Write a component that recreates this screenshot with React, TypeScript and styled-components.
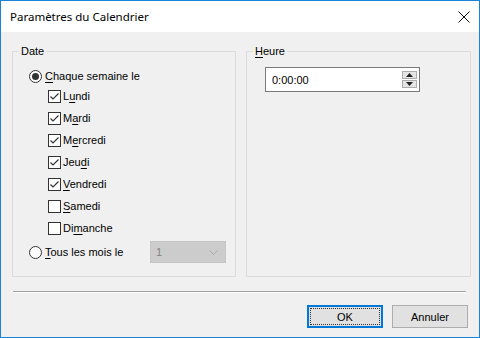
import React from "react";
import styled, { createGlobalStyle } from "styled-components";

const Global = createGlobalStyle`
  html, body { margin: 0; padding: 0; background: #ffffff; }
  body { font-family: "Liberation Sans", Arial, sans-serif; font-size: 11px; color: #000; }
`;

const Window = styled.div`
  width: 480px;
  height: 338px;
  box-sizing: border-box;
  border: 1px solid #1a84d8;
  display: flex;
  flex-direction: column;
  background: #f0f0f0;
  overflow: hidden;
`;

const TitleBar = styled.div`
  height: 31px;
  background: #ffffff;
  display: flex;
  align-items: center;
  justify-content: space-between;
  padding: 0 9px 0 9px;
  flex-shrink: 0;
`;

const Title = styled.span`
  font-family: "Noto Sans", "Open Sans", sans-serif;
  font-size: 11.5px;
  color: #000;
`;

const Body = styled.div`
  flex: 1;
  display: flex;
  flex-direction: column;
  padding: 12px 8px 0 11px;
`;

const Groups = styled.div`
  display: grid;
  grid-template-columns: 224px 225px;
  column-gap: 10px;
`;

const Group = styled.fieldset`
  margin: 0;
  padding: 0;
  border: 1px solid #dcdcdc;
  height: 233px;
  box-sizing: border-box;
  min-width: 0;
`;

const Legend = styled.legend`
  padding: 0 2px;
  margin-left: 6px;
  font-size: 11px;
  line-height: 14px;
`;

const U = styled.span`
  text-decoration: underline;
  text-underline-offset: 2px;
`;

const DateContent = styled.div`
  display: flex;
  flex-direction: column;
  padding: 7px 0 0 16px;
`;

const RadioRow = styled.label<{ $width?: number }>`
  display: flex;
  align-items: center;
  height: 22px;
  gap: 3px;
  white-space: nowrap;
  width: ${(p) => (p.$width ? `${p.$width}px` : "auto")};
`;

const Radio = styled.span<{ $checked?: boolean }>`
  width: 11px;
  height: 11px;
  border: 1px solid #333;
  border-radius: 50%;
  background: #fff;
  display: flex;
  align-items: center;
  justify-content: center;
  flex-shrink: 0;
  &::after {
    content: "";
    width: 7px;
    height: 7px;
    border-radius: 50%;
    background: ${(p) => (p.$checked ? "#333" : "transparent")};
  }
`;

const Days = styled.div`
  display: flex;
  flex-direction: column;
  margin: -2px 0 0 19px;
`;

const CheckRow = styled.label`
  display: flex;
  align-items: center;
  height: 22px;
  gap: 2px;
`;

const Box = styled.span`
  width: 11px;
  height: 11px;
  border: 1px solid #333;
  background: #fff;
  display: flex;
  align-items: center;
  justify-content: center;
  flex-shrink: 0;
`;

const MonthRow = styled.div`
  display: flex;
  align-items: center;
  margin-top: 2px;
`;

const Combo = styled.div`
  width: 76px;
  height: 22px;
  background: #cccccc;
  box-sizing: border-box;
  border: 1px solid #c6c6c6;
  display: flex;
  align-items: center;
  justify-content: space-between;
  padding: 0 7px 0 5px;
  color: #838383;
`;

const TimeContent = styled.div`
  padding: 9px 0 0 18px;
`;

const TimeBox = styled.div`
  width: 155px;
  height: 25px;
  box-sizing: border-box;
  border: 1px solid #7a7a7a;
  background: #fff;
  display: flex;
  align-items: center;
  justify-content: space-between;
  padding: 0 2px 0 6px;
`;

const Spin = styled.div`
  display: flex;
  flex-direction: column;
  gap: 1px;
`;

const SpinBtn = styled.div`
  width: 15px;
  height: 8px;
  box-sizing: border-box;
  background: #e5e5e5;
  border: 1px solid #acacac;
  display: flex;
  align-items: center;
  justify-content: center;
`;

const Separator = styled.div`
  height: 0;
  border-top: 1px solid #a0a0a0;
  border-bottom: 1px solid #fff;
  margin: 14px 5px 0 1px;
`;

const Buttons = styled.div`
  display: flex;
  justify-content: flex-end;
  gap: 9px;
  padding: 12px 3px 0 0;
`;

const Button = styled.button<{ $default?: boolean }>`
  width: 76px;
  height: 23px;
  font-family: inherit;
  font-size: 11px;
  color: #000;
  background: #e1e1e1;
  border: 1px solid ${(p) => (p.$default ? "#0078d7" : "#adadad")};
  box-shadow: ${(p) => (p.$default ? "inset 0 0 0 1px #0078d7" : "none")};
  padding: 0;
  position: relative;
  &::after {
    content: "";
    display: ${(p) => (p.$default ? "block" : "none")};
    position: absolute;
    inset: 2px;
    border: 1px dotted #333;
  }
`;

const Check = () => (
  <svg width="11" height="11" viewBox="0 0 11 11">
    <path d="M1.5 5.5 L4 8 L9.5 2.5" fill="none" stroke="#333" strokeWidth="1.2" />
  </svg>
);

const days: [string, string, string, boolean][] = [
  ["L", "u", "ndi", true],
  ["M", "a", "rdi", true],
  ["M", "e", "rcredi", true],
  ["Jeu", "d", "i", true],
  ["", "V", "endredi", true],
  ["", "S", "amedi", false],
  ["Di", "m", "anche", false],
];

export default function App() {
  return (
    <>
      <Global />
      <Window>
        <TitleBar>
          <Title>Paramètres du Calendrier</Title>
          <svg width="12" height="12" viewBox="0 0 12 12">
            <path d="M0.5 0.5 L11.5 11.5 M11.5 0.5 L0.5 11.5" stroke="#111" strokeWidth="1" />
          </svg>
        </TitleBar>
        <Body>
          <Groups>
            <Group>
              <Legend>Date</Legend>
              <DateContent>
                <RadioRow>
                  <Radio $checked />
                  <span>
                    <U>C</U>haque semaine le
                  </span>
                </RadioRow>
                <Days>
                  {days.map(([a, b, c, checked], i) => (
                    <CheckRow key={i}>
                      <Box>{checked && <Check />}</Box>
                      <span>
                        {a}
                        <U>{b}</U>
                        {c}
                      </span>
                    </CheckRow>
                  ))}
                </Days>
                <MonthRow>
                  <RadioRow $width={121}>
                    <Radio />
                    <span>
                      <U>T</U>ous les mois le
                    </span>
                  </RadioRow>
                  <Combo>
                    <span>1</span>
                    <svg width="9" height="5" viewBox="0 0 9 5">
                      <path d="M0.5 0.5 L4.5 4.5 L8.5 0.5" fill="none" stroke="#a8a8a8" strokeWidth="1" />
                    </svg>
                  </Combo>
                </MonthRow>
              </DateContent>
            </Group>
            <Group>
              <Legend>
                <U>H</U>eure
              </Legend>
              <TimeContent>
                <TimeBox>
                  <span>0:00:00</span>
                  <Spin>
                    <SpinBtn>
                      <svg width="7" height="4" viewBox="0 0 7 4">
                        <path d="M0 4 L3.5 0 L7 4 Z" fill="#222" />
                      </svg>
                    </SpinBtn>
                    <SpinBtn>
                      <svg width="7" height="4" viewBox="0 0 7 4">
                        <path d="M0 0 L3.5 4 L7 0 Z" fill="#222" />
                      </svg>
                    </SpinBtn>
                  </Spin>
                </TimeBox>
              </TimeContent>
            </Group>
          </Groups>
          <Separator />
          <Buttons>
            <Button $default>OK</Button>
            <Button>Annuler</Button>
          </Buttons>
        </Body>
      </Window>
    </>
  );
}
